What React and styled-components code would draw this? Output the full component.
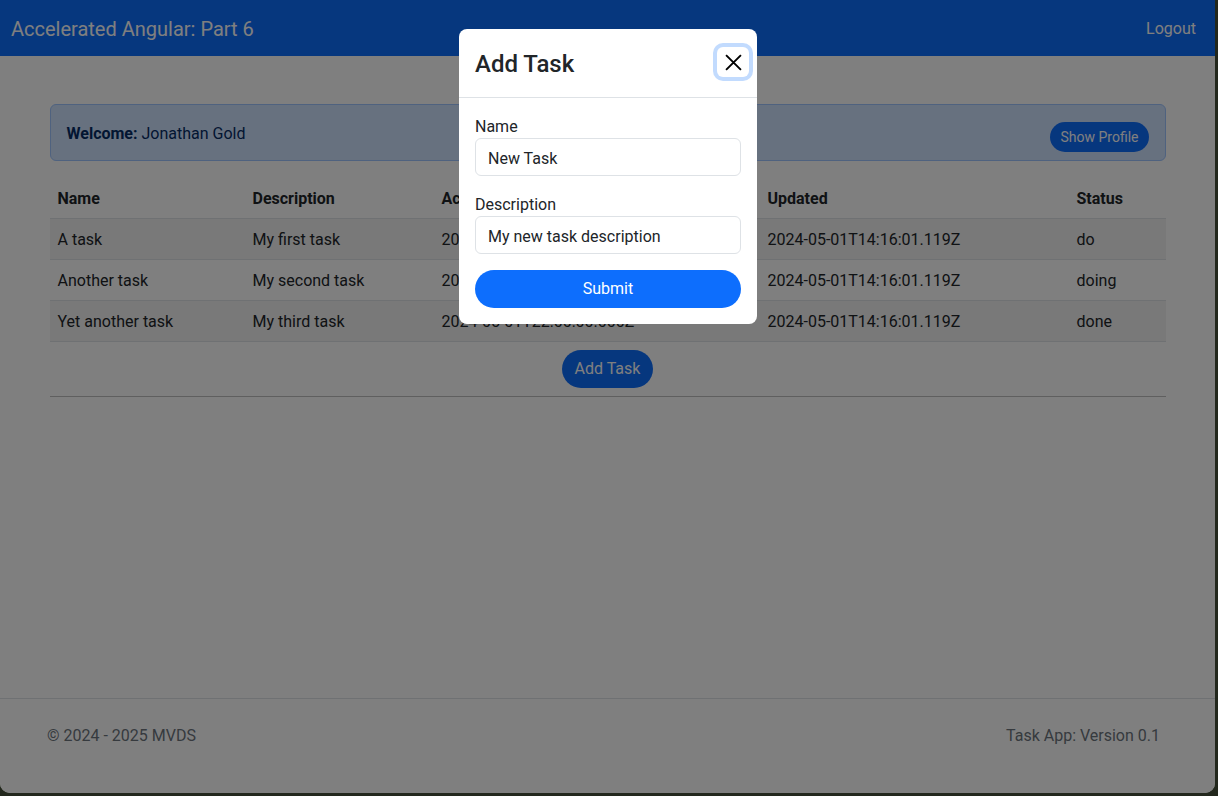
import React from "react";
import styled, { createGlobalStyle } from "styled-components";

const GlobalStyle = createGlobalStyle`
  * { box-sizing: border-box; }
  body {
    margin: 0;
    background: #23281d;
    font-family: Roboto, "Noto Sans", sans-serif;
    font-size: 16px;
    line-height: 1.5;
    color: #212529;
  }
`;

const Frame = styled.div`
  position: relative;
  width: 1215px;
  height: 793px;
  background: #fff;
  border-radius: 0 0 10px 10px;
  overflow: hidden;
  display: flex;
  flex-direction: column;
`;

const Navbar = styled.nav`
  height: 56px;
  background: #0d6efd;
  display: flex;
  align-items: center;
  justify-content: space-between;
  padding: 1px 19px 0 11px;
  color: #fff;
`;

const Brand = styled.span`
  font-size: 20px;
`;

const NavLink = styled.span`
  font-size: 16px;
`;

const Main = styled.main`
  flex: 1;
  width: 1140px;
  margin: 0 auto;
  padding: 48px 12px 0;
`;

const Alert = styled.div`
  display: flex;
  justify-content: space-between;
  align-items: flex-start;
  height: 57px;
  padding: 17px 16px 15px;
  border: 1px solid #9ec5fe;
  border-radius: 6px;
  background: #cfe2ff;
  color: #052c65;
  margin-bottom: 16px;
`;

const Pill = styled.button`
  border: none;
  border-radius: 50rem;
  background: #0d6efd;
  color: #fff;
  font-family: inherit;
  font-size: ${(p) => (p.$small ? "14px" : "16px")};
  line-height: ${(p) => (p.$small ? "22px" : "24px")};
  padding: ${(p) => (p.$small ? "4px 10px" : "7px 13px")};
  width: ${(p) => (p.$block ? "100%" : "auto")};
`;

const Table = styled.table`
  width: 100%;
  border-collapse: collapse;
  table-layout: fixed;
  margin-bottom: 8px;
  th, td {
    text-align: left;
    padding: 9px 8px 7px;
    height: 41px;
    border-bottom: 1px solid #dee2e6;
  }
  th {
    font-weight: 700;
    padding-top: 10px;
    padding-bottom: 6px;
  }
  tbody tr:nth-child(odd) td { background: rgba(0, 0, 0, 0.05); }
`;

const Center = styled.div`
  display: flex;
  justify-content: center;
`;

const Rule = styled.hr`
  border: none;
  border-top: 1px solid rgba(0, 0, 0, 0.25);
  margin: 8px 0 0;
`;

const Footer = styled.footer`
  height: 95px;
  border-top: 1px solid #dee2e6;
  display: flex;
  justify-content: space-between;
  padding: 25px 55px 0 47px;
  color: #6c757d;
`;

const Backdrop = styled.div`
  position: absolute;
  inset: 0;
  background: rgba(0, 0, 0, 0.5);
`;

const Dialog = styled.div`
  position: absolute;
  top: 29px;
  left: 459px;
  width: 298px;
  background: #fff;
  border-radius: 8px;
`;

const DialogHeader = styled.div`
  height: 69px;
  display: flex;
  align-items: center;
  justify-content: space-between;
  padding: 0 4px 0 16px;
  border-bottom: 1px solid #dee2e6;
`;

const DialogTitle = styled.h5`
  margin: 2px 0 0;
  font-size: 24px;
  font-weight: 500;
  line-height: 1.2;
`;

const CloseButton = styled.button`
  width: 32px;
  height: 30px;
  margin-right: 4px;
  margin-top: -2px;
  padding: 0;
  border: none;
  border-radius: 6px;
  background: transparent;
  box-shadow: 0 0 0 4px rgba(13, 110, 253, 0.25);
  display: flex;
  align-items: center;
  justify-content: center;
  color: #000;
`;

const DialogBody = styled.form`
  padding: 16px;
`;

const Label = styled.label`
  display: block;
  padding-top: 1px;
  margin-bottom: -1px;
`;

const Input = styled.input`
  display: block;
  width: 100%;
  height: 38px;
  margin-bottom: 16px;
  padding: 7px 12px 5px;
  border: 1px solid #dee2e6;
  border-radius: 6px;
  font-family: inherit;
  font-size: 16px;
  color: #212529;
`;

const tasks = [
  ["A task", "My first task", "2024-05-01T22:00:00.000Z", "2024-05-01T14:16:01.119Z", "do"],
  ["Another task", "My second task", "2024-05-01T22:00:00.000Z", "2024-05-01T14:16:01.119Z", "doing"],
  ["Yet another task", "My third task", "2024-05-01T22:00:00.000Z", "2024-05-01T14:16:01.119Z", "done"],
];

const widths = [195, 189, 326, 309, 97];

const App = () => (
  <>
    <GlobalStyle />
    <Frame>
      <Navbar>
        <Brand>Accelerated Angular: Part 6</Brand>
        <NavLink>Logout</NavLink>
      </Navbar>
      <Main>
        <Alert>
          <span>
            <strong>Welcome:</strong> Jonathan Gold
          </span>
          <Pill $small>Show Profile</Pill>
        </Alert>
        <Table>
          <colgroup>
            {widths.map((w, i) => (
              <col key={i} style={{ width: w }} />
            ))}
          </colgroup>
          <thead>
            <tr>
              <th>Name</th>
              <th>Description</th>
              <th>Accepted</th>
              <th>Updated</th>
              <th>Status</th>
            </tr>
          </thead>
          <tbody>
            {tasks.map((t) => (
              <tr key={t[0]}>
                {t.map((c, i) => (
                  <td key={i}>{c}</td>
                ))}
              </tr>
            ))}
          </tbody>
        </Table>
        <Center>
          <Pill>Add Task</Pill>
        </Center>
        <Rule />
      </Main>
      <Footer>
        <span>© 2024 - 2025 MVDS</span>
        <span>Task App: Version 0.1</span>
      </Footer>
      <Backdrop />
      <Dialog>
        <DialogHeader>
          <DialogTitle>Add Task</DialogTitle>
          <CloseButton type="button" aria-label="Close">
            <svg width="17" height="17" viewBox="0 0 16 16">
              <path d="M1 1L15 15M15 1L1 15" stroke="currentColor" strokeWidth="1.8" />
            </svg>
          </CloseButton>
        </DialogHeader>
        <DialogBody onSubmit={(e) => e.preventDefault()}>
          <Label>Name</Label>
          <Input defaultValue="New Task" />
          <Label>Description</Label>
          <Input defaultValue="My new task description" />
          <Pill $block type="submit">Submit</Pill>
        </DialogBody>
      </Dialog>
    </Frame>
  </>
);

export default App;
